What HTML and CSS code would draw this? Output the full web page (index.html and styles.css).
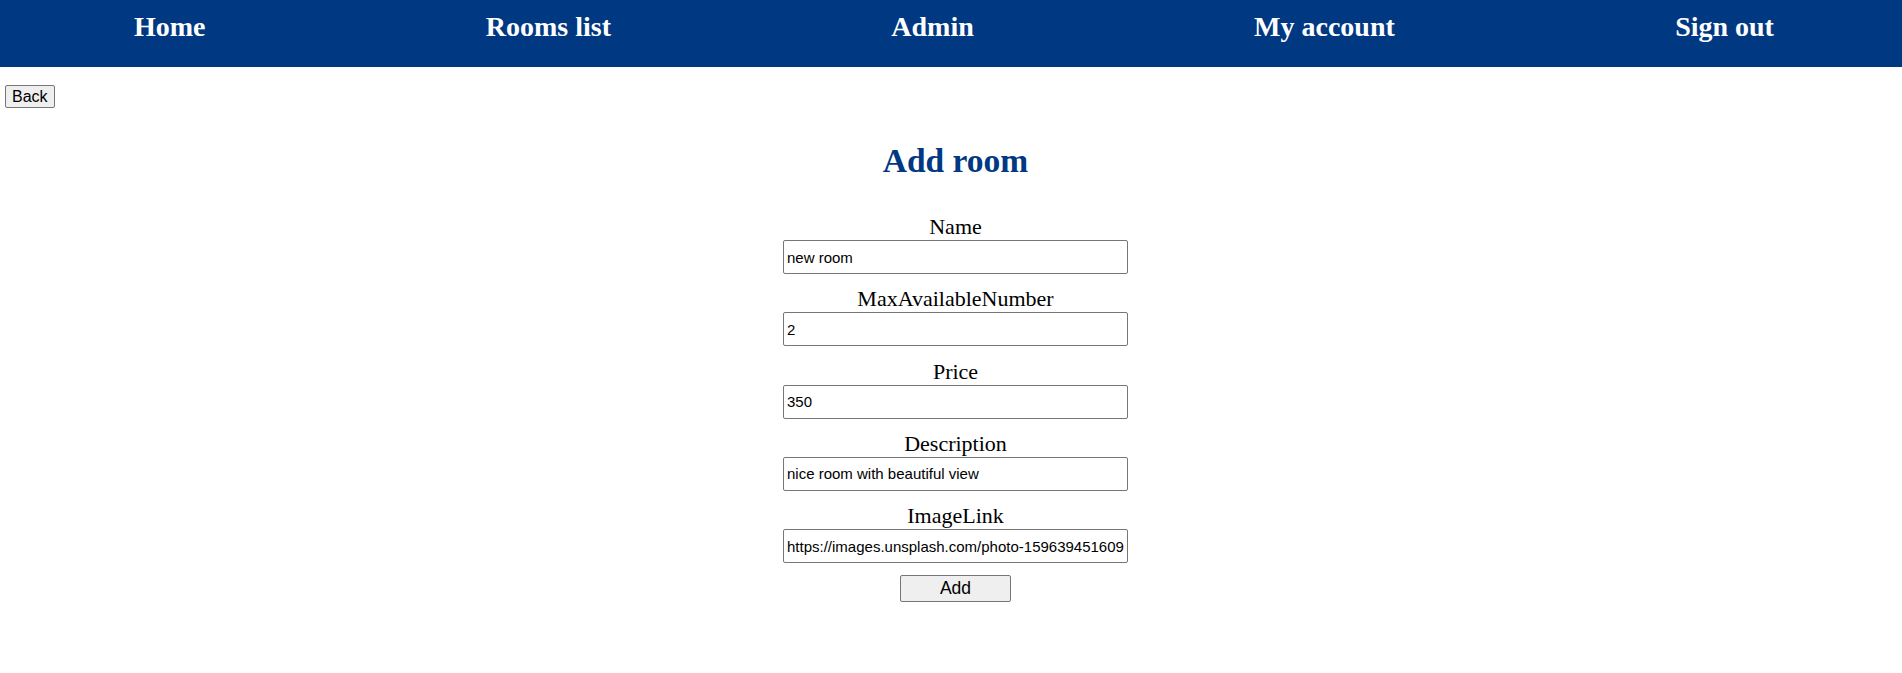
FILE: index.html
```html
<!DOCTYPE html>
<html lang="en">
<head>
<meta charset="utf-8">
<title>Add room</title>
<link rel="stylesheet" href="styles.css">
</head>
<body>
<nav class="topnav">
  <ul class="topnav-list">
    <li><a href="#">Home</a></li>
    <li><a href="#">Rooms list</a></li>
    <li><a href="#">Admin</a></li>
    <li><a href="#">My account</a></li>
    <li><a href="#">Sign out</a></li>
  </ul>
</nav>
<div class="back-row">
  <button class="back-btn" type="button">Back</button>
</div>
<main class="content">
  <h1 class="title">Add room</h1>
  <form class="room-form">
    <div class="field">
      <label for="name">Name</label>
      <input id="name" type="text" value="new room">
    </div>
    <div class="field">
      <label for="max">MaxAvailableNumber</label>
      <input id="max" type="text" value="2">
    </div>
    <div class="field">
      <label for="price">Price</label>
      <input id="price" type="text" value="350">
    </div>
    <div class="field">
      <label for="desc">Description</label>
      <input id="desc" type="text" value="nice room with beautiful view">
    </div>
    <div class="field">
      <label for="img">ImageLink</label>
      <input id="img" type="text" value="https://images.unsplash.com/photo-1596394516093-501ba68a0ba6">
    </div>
    <button class="add-btn" type="button">Add</button>
  </form>
</main>
</body>
</html>
```

FILE: styles.css
```css
html, body {
  margin: 0;
  padding: 0;
  background: #ffffff;
}

body {
  font-family: "Liberation Serif", "Times New Roman", serif;
  color: #000000;
}

.topnav {
  background: #003882;
  height: 67px;
  box-sizing: border-box;
  padding-top: 11px;
}

.topnav-list {
  list-style: none;
  margin: 0;
  padding: 0 128px 0 134px;
  display: flex;
  justify-content: space-between;
}

.topnav-list a {
  color: #ffffff;
  text-decoration: none;
  font-weight: bold;
  font-size: 28px;
  line-height: normal;
}

.back-row {
  padding: 18px 0 0 5px;
  display: flex;
}

.back-btn {
  font-family: "Liberation Sans", Arial, sans-serif;
  font-size: 16px;
  height: 23px;
  padding: 0 6px;
  background: #efefef;
  border: 1px solid #767676;
  border-radius: 2px;
  color: #000000;
}

.content {
  padding-left: 9px;
  display: flex;
  flex-direction: column;
  align-items: center;
}

.title {
  margin: 33px 0 0 0;
  font-size: 33.5px;
  line-height: 40px;
  font-weight: bold;
  color: #003882;
}

.room-form {
  margin-top: 32px;
  display: flex;
  flex-direction: column;
  align-items: center;
  gap: 11.25px;
}

.field {
  display: flex;
  flex-direction: column;
  align-items: center;
}

.field label {
  font-size: 22px;
  line-height: 27px;
}

.field input {
  width: 345px;
  height: 34px;
  box-sizing: border-box;
  font-family: "Liberation Sans", Arial, sans-serif;
  font-size: 15px;
  padding: 1px 3px;
  border: 1px solid #767676;
  border-radius: 2px;
  color: #000000;
  background: #ffffff;
}

.add-btn {
  margin-top: 1px;
  width: 111px;
  height: 27px;
  font-family: "Liberation Sans", Arial, sans-serif;
  font-size: 17.5px;
  padding: 0;
  background: #efefef;
  border: 1px solid #767676;
  border-radius: 2px;
  color: #000000;
}
```
